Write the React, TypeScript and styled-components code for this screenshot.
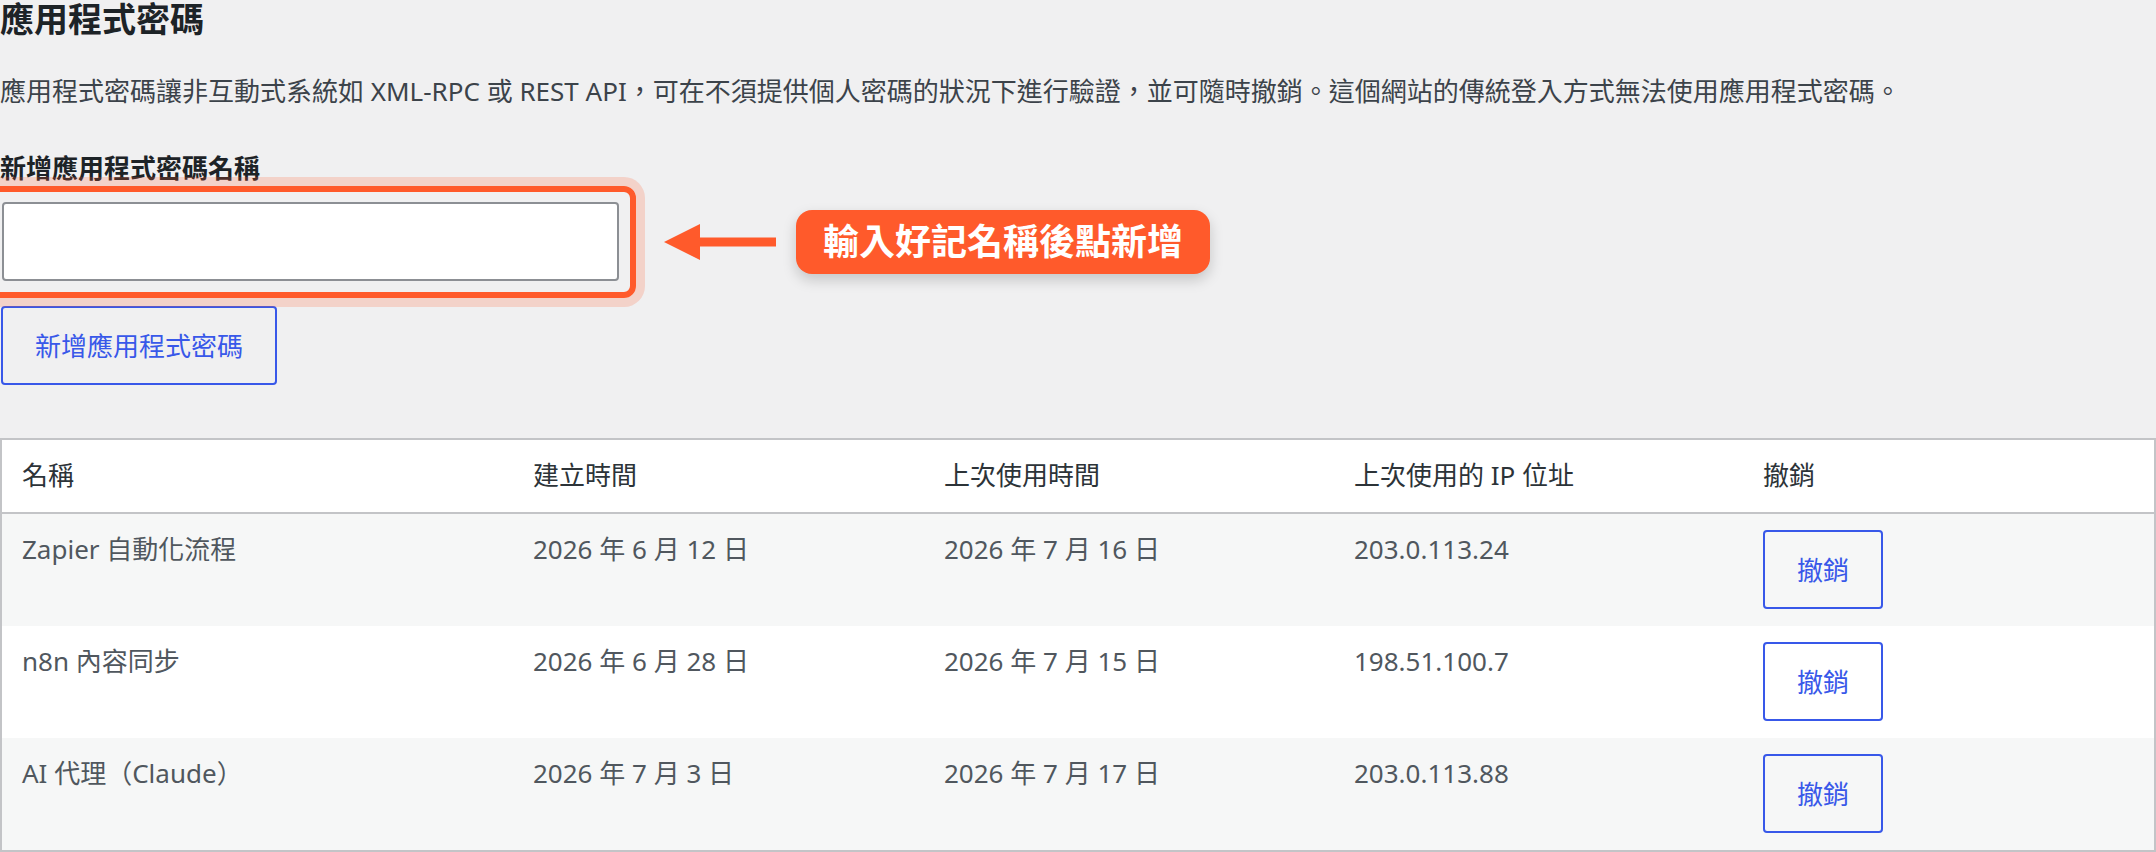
import React from "react";
import styled, { createGlobalStyle } from "styled-components";

// ─── Global ──────────────────────────────────────────────────────────────────
const GlobalStyle = createGlobalStyle`
  html, body {
    margin: 0;
    padding: 0;
    background: #f0f0f1;
    overflow: hidden;
  }
  body {
    font-family: "Noto Sans", "Noto Sans CJK TC", sans-serif;
    color: #3c434a;
  }
  * { box-sizing: border-box; }
`;

// ─── Styled Components ───────────────────────────────────────────────────────
const Page = styled.div`
  width: 100%;
  height: 852px;
`;

const Heading = styled.h2`
  margin: 0;
  font-size: 34px;
  line-height: 38px;
  font-weight: 700;
  color: #1d2327;
`;

const Description = styled.p`
  margin: 34px 0 0;
  font-size: 26px;
  line-height: 39px;
  color: #3c434a;
`;

const FieldLabel = styled.label`
  display: block;
  margin-top: 39px;
  font-size: 26px;
  line-height: 36px;
  font-weight: 700;
  color: #1d2327;
`;

const InputWrap = styled.div`
  position: relative;
  margin: 16px 0 0 2px;
  width: 617px;
  height: 79px;
`;

const NameInput = styled.input`
  display: block;
  width: 100%;
  height: 100%;
  margin: 0;
  padding: 0 16px;
  border: 2px solid #8c8f94;
  border-radius: 4px;
  background: #fff;
  font-family: inherit;
  font-size: 26px;
  color: #2c3338;
  outline: none;
`;

// annotation drawn over the form
const Highlight = styled.div`
  position: absolute;
  top: -16px;
  left: -17px;
  right: -17px;
  bottom: -17px;
  border: 6px solid #ff5a2b;
  border-radius: 12px;
  box-shadow: 0 0 0 9px rgba(255, 90, 43, 0.2);
  pointer-events: none;
`;

const Callout = styled.div`
  position: absolute;
  top: 0;
  left: 662px;
  height: 79px;
  display: flex;
  align-items: center;
  gap: 20px;
  white-space: nowrap;
`;

const CalloutPill = styled.div`
  height: 64px;
  padding: 0 27px;
  display: flex;
  align-items: center;
  background: #ff5a2b;
  border-radius: 16px;
  box-shadow: 0 6px 14px rgba(0, 0, 0, 0.18);
  color: #fff;
  font-size: 36px;
  font-weight: 700;
  line-height: 1;
`;

const OutlineButton = styled.button`
  display: inline-flex;
  align-items: center;
  justify-content: center;
  height: 79px;
  padding: 0 32px;
  margin: 0;
  border: 2px solid #3858e9;
  border-radius: 4px;
  background: transparent;
  color: #3858e9;
  font-family: inherit;
  font-size: 26px;
  line-height: 1;
  cursor: pointer;
  white-space: nowrap;
`;

const AddButton = styled(OutlineButton)`
  margin: 25px 0 0 1px;
`;

const PasswordTable = styled.table`
  width: 100%;
  margin-top: 53px;
  border-collapse: collapse;
  table-layout: fixed;
  border: 2px solid #c3c4c7;
`;

const HeadRow = styled.tr`
  background: #fff;
  border-bottom: 2px solid #c3c4c7;
`;

const HeadCell = styled.th`
  padding: 16px 20px 17px;
  text-align: left;
  font-size: 26px;
  line-height: 39px;
  font-weight: 400;
  color: #2c3338;
`;

const BodyRow = styled.tr<{ $striped?: boolean }>`
  background: ${(p) => (p.$striped ? "#f6f7f7" : "#fff")};
`;

const Cell = styled.td`
  padding: 16px 20px 17px;
  vertical-align: top;
  font-size: 26px;
  line-height: 39px;
  color: #50575e;
  white-space: nowrap;
`;

// ─── Data ────────────────────────────────────────────────────────────────────
const passwords = [
  { name: "Zapier 自動化流程", created: "2026 年 6 月 12 日", used: "2026 年 7 月 16 日", ip: "203.0.113.24" },
  { name: "n8n 內容同步", created: "2026 年 6 月 28 日", used: "2026 年 7 月 15 日", ip: "198.51.100.7" },
  { name: "AI 代理（Claude）", created: "2026 年 7 月 3 日", used: "2026 年 7 月 17 日", ip: "203.0.113.88" },
];

const ArrowLeft = () => (
  <svg width="112" height="36" viewBox="0 0 112 36">
    <polygon points="0,18 36,0 36,36" fill="#ff5a2b" />
    <rect x="30" y="13.5" width="82" height="9" fill="#ff5a2b" />
  </svg>
);

// ─── Component ───────────────────────────────────────────────────────────────
const App: React.FC = () => (
  <Page lang="zh-Hant-TW">
    <GlobalStyle />
    <Heading>應用程式密碼</Heading>
    <Description>
      應用程式密碼讓非互動式系統如 XML-RPC 或 REST API，可在不須提供個人密碼的狀況下進行驗證，並可隨時撤銷。這個網站的傳統登入方式無法使用應用程式密碼。
    </Description>

    <FieldLabel htmlFor="new_application_password_name">新增應用程式密碼名稱</FieldLabel>
    <InputWrap>
      <NameInput id="new_application_password_name" type="text" />
      <Highlight />
      <Callout>
        <ArrowLeft />
        <CalloutPill>輸入好記名稱後點新增</CalloutPill>
      </Callout>
    </InputWrap>
    <AddButton>新增應用程式密碼</AddButton>

    <PasswordTable>
      <colgroup>
        <col style={{ width: 512 }} />
        <col style={{ width: 411 }} />
        <col style={{ width: 410 }} />
        <col style={{ width: 409 }} />
        <col />
      </colgroup>
      <thead>
        <HeadRow>
          <HeadCell>名稱</HeadCell>
          <HeadCell>建立時間</HeadCell>
          <HeadCell>上次使用時間</HeadCell>
          <HeadCell>上次使用的 IP 位址</HeadCell>
          <HeadCell>撤銷</HeadCell>
        </HeadRow>
      </thead>
      <tbody>
        {passwords.map((p, i) => (
          <BodyRow key={p.name} $striped={i % 2 === 0}>
            <Cell>{p.name}</Cell>
            <Cell>{p.created}</Cell>
            <Cell>{p.used}</Cell>
            <Cell>{p.ip}</Cell>
            <Cell>
              <OutlineButton>撤銷</OutlineButton>
            </Cell>
          </BodyRow>
        ))}
      </tbody>
    </PasswordTable>
  </Page>
);

export default App;
